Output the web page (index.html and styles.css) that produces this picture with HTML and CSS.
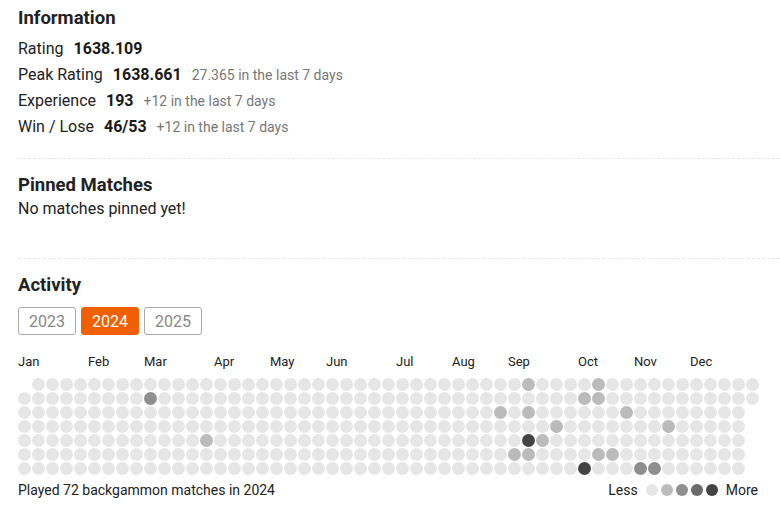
FILE: index.html
```html
<!DOCTYPE html>
<html lang="en">
<head>
    <meta charset="UTF-8">
    <meta name="viewport" content="width=device-width, initial-scale=1.0">
    <title>Player Profile</title>
    <link rel="stylesheet" href="styles.css">
</head>
<body>
    <div class="profile">
        <section class="section info">
            <h2>Information</h2>
            <div class="stat"><span class="label">Rating</span><span class="value">1638.109</span></div>
            <div class="stat"><span class="label">Peak Rating</span><span class="value">1638.661</span><span class="note">27.365 in the last 7 days</span></div>
            <div class="stat"><span class="label">Experience</span><span class="value">193</span><span class="note">+12 in the last 7 days</span></div>
            <div class="stat"><span class="label">Win / Lose</span><span class="value">46/53</span><span class="note">+12 in the last 7 days</span></div>
        </section>

        <section class="section pinned">
            <h2>Pinned Matches</h2>
            <p class="empty">No matches pinned yet!</p>
        </section>

        <section class="section activity">
            <h2>Activity</h2>
            <div class="years">
                <button type="button" class="year">2023</button>
                <button type="button" class="year active">2024</button>
                <button type="button" class="year">2025</button>
            </div>

            <div class="calendar">
                <div class="months" id="months"></div>
                <div class="days" id="days"></div>
                <div class="calendar-footer">
                    <span>Played 72 backgammon matches in 2024</span>
                    <div class="legend">
                        <span>Less</span>
                        <span class="legend-dots">
                            <span class="dot level-0"></span>
                            <span class="dot level-1"></span>
                            <span class="dot level-2"></span>
                            <span class="dot level-3"></span>
                            <span class="dot level-4"></span>
                        </span>
                        <span>More</span>
                    </div>
                </div>
            </div>
        </section>
    </div>

    <script>
        // week columns where the month label goes (first full week)
        const monthLabels = [
            ['Jan', 0], ['Feb', 5], ['Mar', 9], ['Apr', 14], ['May', 18], ['Jun', 22],
            ['Jul', 27], ['Aug', 31], ['Sep', 35], ['Oct', 40], ['Nov', 44], ['Dec', 48]
        ];

        // "column,weekday" -> activity level
        const activity = {
            '9,1': 2, '13,4': 1,
            '36,0': 1, '41,0': 1,
            '40,1': 1, '41,1': 1,
            '34,2': 1, '36,2': 1, '43,2': 1,
            '38,3': 1, '46,3': 1,
            '36,4': 4, '37,4': 1,
            '35,5': 1, '36,5': 1, '41,5': 1, '42,5': 1,
            '40,6': 4, '44,6': 2, '45,6': 2
        };

        const monthsEl = document.getElementById('months');
        monthLabels.forEach(([name, col]) => {
            const label = document.createElement('span');
            label.textContent = name;
            label.style.gridColumnStart = col + 1;
            monthsEl.appendChild(label);
        });

        const daysEl = document.getElementById('days');
        for (let i = 0; i < 366; i++) {
            const col = Math.floor(i / 7);
            const row = i % 7;
            const cell = document.createElement('span');
            cell.className = 'day level-' + (activity[col + ',' + row] || 0);
            if (i === 0) cell.classList.add('blank');
            daysEl.appendChild(cell);
        }
    </script>
</body>
</html>
```

FILE: styles.css
```css
body {
    margin: 0;
    padding: 6px 0 0 18px;
    font-family: Roboto, "Liberation Sans", sans-serif;
    color: #222;
    background: #fff;
}
h2 {
    margin: 0;
    font-size: 18.5px;
    line-height: 24px;
    font-weight: 700;
    color: #222;
}
.section {
    padding: 14px 0 18px;
    border-bottom: 1px dashed #e6e6e6;
}
.section:first-child {
    padding-top: 0;
}
.section:last-child {
    border-bottom: none;
}
.info h2 {
    margin-bottom: 6px;
}
.stat {
    display: flex;
    align-items: baseline;
    gap: 10px;
    font-size: 16px;
    line-height: 26px;
}
.value {
    font-weight: 700;
    color: #1a1a1a;
}
.note {
    font-size: 14px;
    color: #777;
}
.empty {
    margin: 0 0 19px;
    font-size: 16px;
    line-height: 24px;
}
.years {
    display: flex;
    gap: 5px;
    margin-top: 10px;
}
.year {
    width: 58px;
    height: 28px;
    padding: 0;
    border: 1px solid #aaa;
    border-radius: 3px;
    background: #fff;
    color: #888;
    font-family: inherit;
    font-size: 16px;
    cursor: pointer;
}
.year.active {
    background: #f06000;
    border-color: #f06000;
    color: #fff;
}
.calendar {
    display: inline-block;
    margin-top: 19px;
}
.months {
    display: grid;
    grid-template-columns: repeat(53, 14px);
    font-size: 13px;
    line-height: 16px;
    white-space: nowrap;
}
.days {
    display: grid;
    grid-template-rows: repeat(7, 13px);
    grid-auto-columns: 13px;
    grid-auto-flow: column;
    gap: 1px;
    margin-top: 8px;
}
.day {
    border-radius: 50%;
}
.day.blank {
    visibility: hidden;
}
.level-0 { background: #e6e6e6; }
.level-1 { background: #bbb; }
.level-2 { background: #8f8f8f; }
.level-3 { background: #6b6b6b; }
.level-4 { background: #444; }
.calendar-footer {
    display: flex;
    justify-content: space-between;
    align-items: center;
    margin-top: 5px;
    font-size: 14px;
    line-height: 20px;
}
.legend {
    display: flex;
    align-items: center;
    gap: 8px;
    padding-right: 2px;
}
.legend-dots {
    display: flex;
    gap: 3px;
}
.dot {
    width: 12px;
    height: 12px;
    border-radius: 50%;
}
```
